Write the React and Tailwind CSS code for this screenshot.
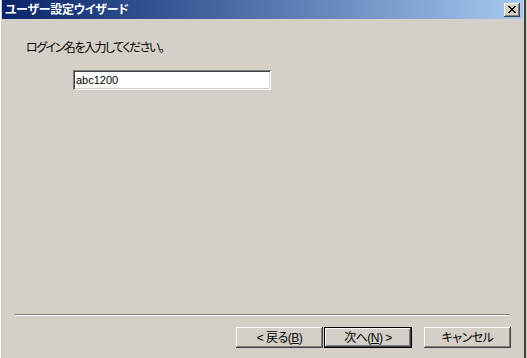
import React, { useState } from 'react';

// Win2000-style "user setup wizard" dialog, single step: enter login name.

const FONT = "font-['Liberation_Sans','Noto_Sans_CJK_JP',sans-serif] [font-feature-settings:'palt']";

// raised 3D edge used by push buttons and the caption close box
const RAISED =
  'shadow-[inset_-1px_-1px_#404040,inset_1px_1px_#ffffff,inset_-2px_-2px_#808080,inset_2px_2px_#d4d0c8]';

// sunken edge for the text field
const SUNKEN =
  'shadow-[inset_1px_1px_#808080,inset_-1px_-1px_#ffffff,inset_2px_2px_#404040,inset_-2px_-2px_#d4d0c8]';

const CloseBox = () => (
  <button className={`w-[16px] h-[14px] bg-[#d4d0c8] ${RAISED} flex items-center justify-center`}>
    <svg width="8" height="7" viewBox="0 0 8 7" shapeRendering="crispEdges">
      <path
        fill="#000"
        d="M0 0h2v1h1v1h2v-1h1v-1h2v1h-1v1h-1v1h-1v1h1v1h1v1h1v1h-2v-1h-1v-1h-2v1h-1v1h-2v-1h1v-1h1v-1h1v-1h-1v-1h-1v-1h-1z"
      />
    </svg>
  </button>
);

const PushButton = ({ children, isDefault, className = '' }) => (
  <button
    className={`h-[21px] bg-[#d4d0c8] ${isDefault ? 'border border-black' : ''} ${className}`}
  >
    <div
      className={`h-full w-full flex items-center justify-center text-[12px] leading-none text-black tracking-[-0.5px] ${RAISED}`}
    >
      {children}
    </div>
  </button>
);

export default function App() {
  const [login, setLogin] = useState('abc1200');

  return (
    <div className={`w-[527px] h-[358px] bg-[#d4d0c8] flex overflow-hidden ${FONT}`}>
      {/* ── dialog window ─────────────────────────────────────────── */}
      <div className="w-[526px] h-full flex flex-col border-l border-l-white pl-px pr-px border-r-2 border-r-[#404040]">
        {/* caption bar */}
        <div className="h-[19px] flex items-center justify-between bg-gradient-to-r from-[#0a246a] to-[#a6caf0] pl-[3px] pr-[3px]">
          <span className="text-white text-[12px] font-bold leading-none tracking-[-0.3px]">ユーザー設定ウイザード</span>
          <CloseBox />
        </div>

        {/* body */}
        <div className="flex-1 flex flex-col">
          <p className="mt-[22px] ml-[24px] text-[12px] leading-[14px] text-black tracking-[-1.5px]">
            ログイン名を入力してください。
          </p>

          <input
            className={`mt-[15px] ml-[71px] w-[198px] h-[20px] bg-white ${SUNKEN} px-[3px] text-[11px] text-black outline-none font-['Liberation_Sans',sans-serif]`}
            value={login}
            onChange={e => setLogin(e.target.value)}
          />

          {/* etched separator */}
          <div className="mt-auto ml-[13px] mr-[13px] h-[2px] border-t border-t-[#808080] border-b border-b-white" />

          {/* wizard buttons */}
          <div className="mt-[11px] mb-[10px] flex justify-end pr-[12px]">
            <PushButton className="w-[87px]">
              &lt; 戻る(<span className="underline">B</span>)
            </PushButton>
            <PushButton className="w-[88px] ml-px" isDefault>
              次へ(<span className="underline">N</span>) &gt;
            </PushButton>
            <PushButton className="w-[87px] ml-[12px]">キャンセル</PushButton>
          </div>
        </div>
      </div>
      <div className="flex-1 bg-[#d4d0c8]" />
    </div>
  );
}
